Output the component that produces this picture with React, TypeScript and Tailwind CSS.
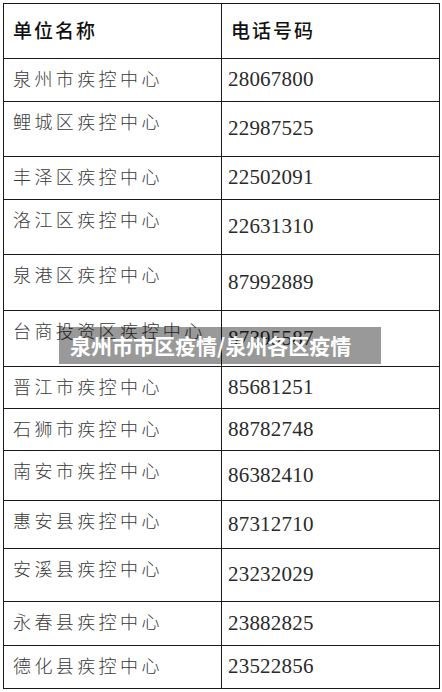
import React from 'react';

const ROWS: { name: string; phone: string; h: number }[] = [
  { name: '泉州市疾控中心', phone: '28067800', h: 43 },
  { name: '鲤城区疾控中心', phone: '22987525', h: 55 },
  { name: '丰泽区疾控中心', phone: '22502091', h: 43 },
  { name: '洛江区疾控中心', phone: '22631310', h: 55 },
  { name: '泉港区疾控中心', phone: '87992889', h: 56 },
  { name: '台商投资区疾控中心', phone: '87395587', h: 56 },
  { name: '晋江市疾控中心', phone: '85681251', h: 42 },
  { name: '石狮市疾控中心', phone: '88782748', h: 42 },
  { name: '南安市疾控中心', phone: '86382410', h: 50 },
  { name: '惠安县疾控中心', phone: '87312710', h: 48 },
  { name: '安溪县疾控中心', phone: '23232029', h: 53 },
  { name: '永春县疾控中心', phone: '23882825', h: 44 },
  { name: '德化县疾控中心', phone: '23522856', h: 43 },
];

const cjk = { fontFamily: '"Noto Sans CJK SC", sans-serif' };
const serif = { fontFamily: '"Liberation Serif", "Noto Sans CJK SC", serif' };

export default function App() {
  return (
    <div className="w-[442px] h-[692px] bg-white relative overflow-hidden pt-[3px] pl-[3px]">
      <div className="w-[437px] border-[1.5px] border-[#1a1a1a] border-b-0">
        {/* header */}
        <div className="flex h-[55px] border-b-[1.5px] border-[#1a1a1a]">
          <div className="w-[218px] border-r-[1.5px] border-[#1a1a1a] flex items-center pl-[9px] pb-[1px]">
            <span className="text-[19px] font-medium tracking-[2px] text-[#111]" style={cjk}>单位名称</span>
          </div>
          <div className="flex-1 flex items-center pl-[9px] pb-[1px]">
            <span className="text-[19px] font-medium tracking-[2px] text-[#111]" style={cjk}>电话号码</span>
          </div>
        </div>
        {ROWS.map((r) => (
          <div key={r.name} className="flex border-b-[1.5px] border-[#1a1a1a]" style={{ height: r.h }}>
            <div className="w-[218px] border-r-[1.5px] border-[#1a1a1a] pl-[9px] pt-[6px]">
              <span className="text-[18px] font-light tracking-[3.4px] text-[#3a3a3a] whitespace-nowrap" style={cjk}>
                {r.name}
              </span>
            </div>
            <div className="flex-1 flex items-center pl-[6px]">
              <span className="text-[21px] tracking-[0.2px] text-[#2a2a2a]" style={serif}>{r.phone}</span>
            </div>
          </div>
        ))}
      </div>

      {/* overlay banner */}
      <div className="absolute left-[59px] top-[327px] w-[322px] h-[37px] bg-black/40 flex items-center pl-[11px]">
        <span className="text-[21px] font-bold text-white leading-none" style={cjk}>泉州市市区疫情/泉州各区疫情</span>
      </div>
    </div>
  );
}
